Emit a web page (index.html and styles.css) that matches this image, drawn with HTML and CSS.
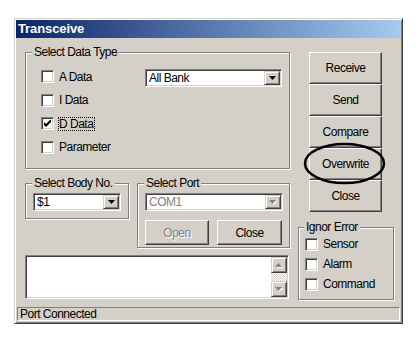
FILE: index.html
```html
<!doctype html>
<html>
<head>
  <meta charset="utf-8"/>
  <title>Transceive</title>
  <link rel="stylesheet" href="styles.css">
</head>
<body>
<div class="window">
  <div class="titlebar">Transceive</div>
  <div class="main">
    <div class="left">
      <fieldset class="group data-type">
        <legend>Select Data Type</legend>
        <div class="group-body data-row">
          <div class="checks">
            <label class="check"><span class="box"></span><span>A Data</span></label>
            <label class="check"><span class="box"></span><span>I Data</span></label>
            <label class="check">
              <span class="box"><svg width="7" height="7" viewBox="0 0 7 7"><polygon points="0,2 2,4 7,-1 7,2 2,7 0,5" fill="#000"/></svg></span>
              <span class="focus">D Data</span>
            </label>
            <label class="check"><span class="box"></span><span>Parameter</span></label>
          </div>
          <div class="combo bank">
            <span class="value">All Bank</span>
            <span class="drop"><svg width="7" height="4" viewBox="0 0 7 4"><polygon points="0,0 7,0 3.5,4" fill="#000"/></svg></span>
          </div>
        </div>
      </fieldset>

      <div class="group-row">
        <fieldset class="group body-no">
          <legend>Select Body No.</legend>
          <div class="group-body">
            <div class="combo">
              <span class="value">$1</span>
              <span class="drop"><svg width="7" height="4" viewBox="0 0 7 4"><polygon points="0,0 7,0 3.5,4" fill="#000"/></svg></span>
            </div>
          </div>
        </fieldset>
        <fieldset class="group port">
          <legend>Select Port</legend>
          <div class="group-body">
            <div class="combo disabled">
              <span class="value">COM1</span>
              <span class="drop"><svg width="8" height="5" viewBox="0 0 8 5"><polygon points="1,1 8,1 4.5,5" fill="#fff"/><polygon points="0,0 7,0 3.5,4" fill="#808080"/></svg></span>
            </div>
            <div class="port-buttons">
              <button class="btn off">Open</button>
              <button class="btn close-port">Close</button>
            </div>
          </div>
        </fieldset>
      </div>

      <div class="log">
        <div class="log-text"></div>
        <div class="scrollbar">
          <span class="scroll-btn"><svg width="8" height="5" viewBox="0 0 8 5"><polygon points="1,5 8,5 4.5,1" fill="#fff"/><polygon points="0,4 7,4 3.5,0" fill="#808080"/></svg></span>
          <span class="track"></span>
          <span class="scroll-btn"><svg width="8" height="5" viewBox="0 0 8 5"><polygon points="1,1 8,1 4.5,5" fill="#fff"/><polygon points="0,0 7,0 3.5,4" fill="#808080"/></svg></span>
        </div>
      </div>
    </div>

    <div class="right">
      <div class="buttons">
        <button class="btn">Receive</button>
        <button class="btn">Send</button>
        <button class="btn">Compare</button>
        <button class="btn">Overwrite</button>
        <button class="btn">Close</button>
      </div>
      <!-- hand drawn mark round Overwrite -->
      <svg class="mark" width="83" height="43" viewBox="0 0 83 43">
        <ellipse cx="41.5" cy="21.5" rx="39.5" ry="19.5" fill="none" stroke="#000" stroke-width="2.5"/>
      </svg>
      <fieldset class="group ignore">
        <legend>Ignor Error</legend>
        <div class="group-body">
          <label class="check"><span class="box"></span><span>Sensor</span></label>
          <label class="check"><span class="box"></span><span>Alarm</span></label>
          <label class="check"><span class="box"></span><span>Command</span></label>
        </div>
      </fieldset>
    </div>
  </div>
  <div class="statusbar">Port Connected</div>
</div>
</body>
</html>
```

FILE: styles.css
```css
body {
  margin: 0;
  background: #fff;
  color: #000;
  font-family: "Liberation Sans", Arial, sans-serif;
  font-size: 12px;
  letter-spacing: -0.5px;
}
.window {
  width: 389px;
  height: 306px;
  margin: 18px 0 0 14px;
  padding: 1px;
  box-sizing: border-box;
  background: #d4d0c8;
  border: 1px solid;
  border-color: #d4d0c8 #404040 #404040 #d4d0c8;
  box-shadow: inset 1px 1px #fff, inset -1px -1px #808080;
}
.titlebar {
  height: 18px;
  line-height: 18px;
  padding-left: 2px;
  color: #fff;
  font-weight: bold;
  font-size: 13px;
  letter-spacing: -0.1px;
  background: linear-gradient(90deg, #0a246a, #a6caf0);
}
.main {
  display: flex;
  gap: 8px;
  padding: 7px 0 0 9px;
}
.left {
  width: 265px;
  display: flex;
  flex-direction: column;
}
.right {
  width: 96px;
  position: relative;
}

/* group boxes */
.group {
  margin: 0;
  padding: 0;
  min-width: 0;
  box-sizing: border-box;
  border: 1px solid #808080;
  box-shadow: inset 1px 1px #fff, 1px 1px #fff;
}
.group legend {
  margin-left: 6px;
  padding: 0 2px;
  line-height: 14px;
  background: #d4d0c8;
}
.data-type .group-body {
  padding: 6px 6px 9px 15px;
}
.data-row {
  display: flex;
}
.checks {
  width: 104px;
}
.check {
  display: flex;
  align-items: center;
  gap: 5px;
  height: 23.5px;
}
.box {
  flex: none;
  width: 13px;
  height: 13px;
  box-sizing: border-box;
  display: flex;
  align-items: center;
  justify-content: center;
  background: #fff;
  border: 1px solid;
  border-color: #808080 #fff #fff #808080;
  box-shadow: inset 1px 1px #404040, inset -1px -1px #d4d0c8;
}
.focus {
  line-height: 12px;
  padding-right: 1px;
  outline: 1px dotted #000;
}

/* combo boxes */
.combo {
  display: flex;
  height: 18px;
  padding: 1px;
  box-sizing: border-box;
  background: #fff;
  border: 1px solid;
  border-color: #808080 #fff #fff #808080;
  box-shadow: inset 1px 1px #404040, inset -1px -1px #d4d0c8;
}
.combo .value {
  flex: 1;
  padding-left: 2px;
  line-height: 14px;
}
.combo.disabled .value {
  color: #808080;
}
.drop {
  width: 16px;
  box-sizing: border-box;
  display: flex;
  align-items: center;
  justify-content: center;
  background: #d4d0c8;
  border: 1px solid;
  border-color: #d4d0c8 #404040 #404040 #d4d0c8;
  box-shadow: inset 1px 1px #fff, inset -1px -1px #808080;
}
.bank {
  width: 137px;
  margin-top: 4px;
}
.group-row {
  display: flex;
  align-items: flex-start;
  gap: 8px;
  margin-top: 7px;
}
.body-no {
  width: 104px;
}
.body-no .group-body {
  padding: 3px 6px 7px 7px;
}
.body-no .combo {
  width: 88px;
}
.port {
  width: 153px;
}
.port .group-body {
  padding: 3px 5px 2px 7px;
}
.port .combo {
  width: 138px;
}
.port-buttons {
  display: flex;
  gap: 8px;
  margin-top: 9px;
}
.port-buttons .btn {
  width: 64px;
  height: 25px;
}
.port-buttons .close-port {
  width: 65px;
}

/* push buttons */
.btn {
  margin: 0;
  padding: 0;
  box-sizing: border-box;
  font: inherit;
  letter-spacing: inherit;
  color: #000;
  background: #d4d0c8;
  border: 1px solid;
  border-color: #fff #404040 #404040 #fff;
  box-shadow: inset -1px -1px #808080;
}
.btn.off {
  color: #808080;
  text-shadow: 1px 1px #fff;
}
.buttons {
  display: flex;
  flex-direction: column;
  width: 73px;
  margin: 7px 0 0 11px;
}
.buttons .btn {
  height: 32px;
}
.mark {
  position: absolute;
  left: 5px;
  top: 97px;
  pointer-events: none;
}
.ignore {
  margin-top: 8px;
}
.ignore legend {
  margin-left: 5px;
}
.ignore .group-body {
  padding: 0 5px 5px 6px;
}
.ignore .check {
  height: 20px;
}

/* log box */
.log {
  display: flex;
  width: 264px;
  height: 44px;
  margin-top: 7px;
  padding: 1px;
  box-sizing: border-box;
  background: #fff;
  border: 1px solid;
  border-color: #808080 #fff #fff #808080;
  box-shadow: inset 1px 1px #404040, inset -1px -1px #d4d0c8;
}
.log-text {
  flex: 1;
}
.scrollbar {
  width: 16px;
  display: flex;
  flex-direction: column;
}
.scroll-btn {
  height: 16px;
  box-sizing: border-box;
  display: flex;
  align-items: center;
  justify-content: center;
  background: #d4d0c8;
  border: 1px solid;
  border-color: #d4d0c8 #404040 #404040 #d4d0c8;
  box-shadow: inset 1px 1px #fff, inset -1px -1px #808080;
}
.track {
  flex: 1;
  background: repeating-conic-gradient(#fff 0 25%, #d4d0c8 0 50%) 0 0 / 2px 2px;
}

.statusbar {
  height: 14px;
  margin: 7px 1px 0;
  padding-left: 2px;
  line-height: 12px;
  box-sizing: border-box;
  border: 1px solid;
  border-color: #808080 #fff #fff #808080;
}
```
